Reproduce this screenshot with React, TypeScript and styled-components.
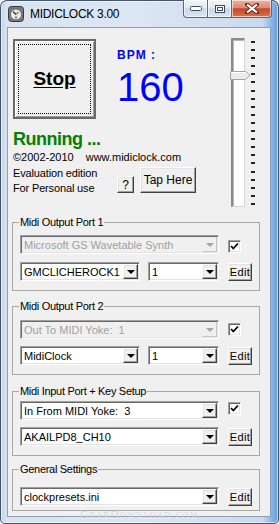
import styled, { createGlobalStyle, css } from 'styled-components'

const GlobalStyle = createGlobalStyle`
  html, body {
    margin: 0;
    padding: 0;
    background: #fff;
  }
  body {
    font-family: 'Liberation Sans', Arial, sans-serif;
    font-size: 11px;
    color: #000;
  }
`

const raised = css`
  box-sizing: border-box;
  background: #f0f0f0;
  border: 1px solid;
  border-color: #fff #404040 #404040 #fff;
  box-shadow: inset -1px -1px 0 #a0a0a0, inset 1px 1px 0 #e3e3e3;
`

const sunken = css`
  box-sizing: border-box;
  border: 1px solid;
  border-color: #a0a0a0 #fff #fff #a0a0a0;
  box-shadow: inset 1px 1px 0 #696969, inset -1px -1px 0 #e3e3e3;
`

const Window = styled.div`
  position: relative;
  width: 279px;
  height: 524px;
  box-sizing: border-box;
  display: flex;
  flex-direction: column;
  padding: 0 8px 7px 7px;
  border-radius: 7px 7px 5px 5px;
  overflow: hidden;
  background: linear-gradient(
    to right,
    #c3d4e7 0px,
    #d8e4f1 7px,
    #dce6f2 50%,
    #c9daee 262px,
    #86b3e6 272px,
    #5f98d8 279px
  );
  box-shadow: inset 0 0 0 1px #44566c, inset 0 0 0 2px rgba(255, 255, 255, 0.55);
`

const TitleBar = styled.div`
  height: 27px;
  display: flex;
  align-items: flex-start;
  flex: none;
`

const AppIcon = styled.svg`
  margin: 6px 0 0 1px;
  flex: none;
`

const Title = styled.div`
  margin: 6px 0 0 6px;
  line-height: 16px;
  font-size: 12px;
  letter-spacing: -0.3px;
  color: #000;
`

const Controls = styled.div`
  margin: 0 -1px 0 auto;
  display: flex;
  height: 18px;
`

const CtlButton = styled.div<{ $w: number; $close?: boolean; $first?: boolean }>`
  width: ${(p) => p.$w}px;
  height: 18px;
  box-sizing: border-box;
  display: flex;
  align-items: center;
  justify-content: center;
  border: 1px solid #56697f;
  border-top: none;
  margin-left: ${(p) => (p.$first ? 0 : -1)}px;
  border-radius: ${(p) => (p.$first ? '0 0 0 4px' : p.$close ? '0 0 4px 0' : '0')};
  background: ${(p) =>
    p.$close
      ? 'linear-gradient(#eab2a4 0%, #dc8a74 45%, #c8452c 52%, #d5734f 100%)'
      : 'linear-gradient(#f3f7fc 0%, #e1e9f3 45%, #cad7e7 52%, #d9e5f3 100%)'};
  box-shadow: inset 0 0 0 1px rgba(255, 255, 255, 0.6);
`

const Client = styled.div`
  flex: 1;
  display: flex;
  flex-direction: column;
  background: #f0f0f0;
  border: 1px solid #8ba0b8;
`

const TopSection = styled.div`
  display: flex;
  padding-left: 5px;
`

const LeftCol = styled.div`
  width: 217px;
  display: flex;
  flex-direction: column;
  padding-top: 11px;
`

const HeadRow = styled.div`
  display: flex;
  align-items: flex-start;
`

const StopButton = styled.div`
  width: 83px;
  height: 80px;
  box-sizing: border-box;
  display: flex;
  align-items: center;
  justify-content: center;
  background: #f0f0f0;
  border: 2px solid #6a6a6a;
  box-shadow: inset 1px 1px 0 #fff, inset -1px -1px 0 #a0a0a0;
  outline: 1px dotted #000;
  outline-offset: -6px;
  font-size: 19px;
  font-weight: bold;
  text-decoration: underline;
  text-underline-offset: 2px;
`

const BpmBlock = styled.div`
  margin-left: 21px;
  padding-top: 9px;
  color: #0000ff;
`

const BpmLabel = styled.div`
  font-size: 12px;
  font-weight: bold;
  line-height: 14px;
  letter-spacing: 1px;
`

const BpmValue = styled.div`
  margin-top: 5px;
  font-size: 40px;
  line-height: 40px;
`

const Running = styled.div`
  margin-top: 10px;
  font-size: 18px;
  font-weight: bold;
  line-height: 20px;
  letter-spacing: -0.5px;
  color: #008000;
`

const CopyRow = styled.div`
  margin-top: 1px;
  display: flex;
  gap: 12px;
  line-height: 14px;
`

const EvalRow = styled.div`
  margin-top: 2px;
  display: flex;
  align-items: flex-end;
`

const EvalText = styled.div`
  width: 104px;
  line-height: 15px;
  letter-spacing: -0.15px;
`

const PushButton = styled.div<{ $w: number; $h: number; $size?: number }>`
  ${raised};
  width: ${(p) => p.$w}px;
  height: ${(p) => p.$h}px;
  display: flex;
  align-items: center;
  justify-content: center;
  font-size: ${(p) => p.$size ?? 11}px;
  margin-bottom: 3px;
`

const HelpButton = styled(PushButton)`
  margin-right: 6px;
`

const SliderCol = styled.div`
  position: relative;
  display: flex;
  align-items: flex-start;
  padding-top: 10px;
  margin-left: 1px;
`

const Track = styled.div`
  width: 14px;
  height: 169px;
  box-sizing: border-box;
  background: #fff;
  border-style: solid;
  border-width: 2px 1px 1px 2px;
  border-color: #8a8a8a #d6d6d6 #d6d6d6 #8a8a8a;
  box-shadow: inset 1px 1px 0 #b8b8b8;
`

const Thumb = styled.svg`
  position: absolute;
  left: -1px;
  top: 43px;
`

const Ticks = styled.div`
  margin: 3px 0 0 6px;
  height: 164px;
  display: flex;
  flex-direction: column;
  justify-content: space-between;
`

const Tick = styled.span`
  width: 4px;
  height: 2px;
  background: #222;
`

const Groups = styled.div`
  padding: 8px 0 0 4px;
  display: flex;
  flex-direction: column;
`

const Group = styled.fieldset<{ $mt: number; $pt: number; $pb: number }>`
  margin: ${(p) => p.$mt}px 0 0 0;
  width: 248px;
  box-sizing: border-box;
  min-inline-size: 0;
  border: 1px solid #a9a9a9;
  padding: ${(p) => p.$pt}px 6px ${(p) => p.$pb}px 7px;
`

const Legend = styled.legend`
  padding: 0 1px;
  margin-left: -1px;
  font-size: 11px;
  line-height: 14px;
  letter-spacing: -0.3px;
`

const Rows = styled.div<{ $gap: number }>`
  display: flex;
  flex-direction: column;
  gap: ${(p) => p.$gap}px;
`

const Row = styled.div`
  display: flex;
  align-items: center;
`

const Combo = styled.div<{ $w: number; $off?: boolean; $mr?: number }>`
  ${sunken};
  width: ${(p) => p.$w}px;
  height: 19px;
  flex: none;
  display: flex;
  align-items: center;
  justify-content: space-between;
  padding: 0 1px 0 3px;
  margin-right: ${(p) => p.$mr ?? 10}px;
  background: ${(p) => (p.$off ? '#f0f0f0' : '#fff')};
  color: ${(p) => (p.$off ? '#a0a0a0' : '#000')};
  white-space: pre;
  overflow: hidden;
`

const ArrowBtn = styled.span<{ $off?: boolean }>`
  ${raised};
  width: 15px;
  height: 15px;
  flex: none;
  display: flex;
  align-items: center;
  justify-content: center;
  ${(p) =>
    p.$off &&
    css`
      border-color: #f0f0f0 #c8c8c8 #c8c8c8 #f0f0f0;
      box-shadow: none;
    `}

  &::after {
    content: '';
    margin-top: 1px;
    border-left: 4px solid transparent;
    border-right: 4px solid transparent;
    border-top: 4px solid ${(p) => (p.$off ? '#a6a6a6' : '#000')};
  }
`

const Check = styled.span<{ $align: 'flex-start' | 'center' | 'flex-end' }>`
  ${sunken};
  width: 13px;
  height: 13px;
  flex: none;
  display: flex;
  align-items: center;
  justify-content: center;
  background: #fff;
  align-self: ${(p) => p.$align};
  margin-bottom: ${(p) => (p.$align === 'flex-end' ? 1 : 0)}px;
  margin-top: ${(p) => (p.$align === 'flex-start' ? 1 : 0)}px;
`

const EditButton = styled.div`
  ${raised};
  width: 24px;
  height: 18px;
  flex: none;
  display: flex;
  align-items: center;
  justify-content: center;
  letter-spacing: 0.4px;
`

const Watermark = styled.div`
  position: absolute;
  left: 0;
  right: 0;
  bottom: 4px;
  text-align: center;
  font-family: 'Liberation Serif', 'Times New Roman', serif;
  font-size: 11px;
  font-variant: small-caps;
  letter-spacing: 1.5px;
  color: rgba(150, 150, 150, 0.35);
  text-shadow: 0 1px 0 rgba(255, 255, 255, 0.5);
`

function ComboBox({ text, w, off, mr }: { text: string; w: number; off?: boolean; mr?: number }) {
  return (
    <Combo $w={w} $off={off} $mr={mr}>
      <span>{text}</span>
      <ArrowBtn $off={off} />
    </Combo>
  )
}

function CheckBox({ align }: { align: 'flex-start' | 'center' | 'flex-end' }) {
  return (
    <Check $align={align}>
      <svg width='9' height='9' viewBox='0 0 9 9'>
        <polyline points='1,4 3.3,6.5 8,1.5' fill='none' stroke='#000' strokeWidth='1.8' />
      </svg>
    </Check>
  )
}

export default function App() {
  const ticks = Array.from({ length: 21 }, (_, i) => i)

  return (
    <>
      <GlobalStyle />
      <Window>
        <TitleBar>
          <AppIcon width='16' height='16' viewBox='0 0 16 16'>
            <rect x='0.5' y='0.5' width='15' height='15' rx='3' fill='#7a7a7a' stroke='#3a3a3a' />
            <circle cx='8' cy='8.5' r='5.6' fill='#e8e8e8' stroke='#555' strokeWidth='0.8' />
            <line x1='8' y1='8.5' x2='5' y2='5.5' stroke='#333' strokeWidth='1.2' />
            <line x1='8' y1='8.5' x2='10.5' y2='6' stroke='#333' strokeWidth='1' />
            <circle cx='8' cy='11.5' r='1.2' fill='#888' />
          </AppIcon>
          <Title>MIDICLOCK 3.00</Title>
          <Controls>
            <CtlButton $w={25} $first>
              <svg width='12' height='5' viewBox='0 0 12 5'>
                <rect x='0.5' y='0.5' width='11' height='4' rx='1' fill='#fff' stroke='#3d4d60' />
              </svg>
            </CtlButton>
            <CtlButton $w={25}>
              <svg width='10' height='8' viewBox='0 0 10 8'>
                <rect x='0.5' y='0.5' width='9' height='7' fill='#fff' stroke='#3d4d60' />
                <rect x='2.5' y='2.5' width='5' height='3' fill='none' stroke='#3d4d60' />
              </svg>
            </CtlButton>
            <CtlButton $w={41} $close>
              <svg width='14' height='11' viewBox='0 0 14 11'>
                <path
                  d='M2 1.5 L12 9.5 M12 1.5 L2 9.5'
                  stroke='#6b2a1c'
                  strokeWidth='4'
                  strokeLinecap='round'
                />
                <path d='M2 1.5 L12 9.5 M12 1.5 L2 9.5' stroke='#fff' strokeWidth='2.2' />
              </svg>
            </CtlButton>
          </Controls>
        </TitleBar>

        <Client>
          <TopSection>
            <LeftCol>
              <HeadRow>
                <StopButton>Stop</StopButton>
                <BpmBlock>
                  <BpmLabel>BPM :</BpmLabel>
                  <BpmValue>160</BpmValue>
                </BpmBlock>
              </HeadRow>
              <Running>Running ...</Running>
              <CopyRow>
                <span>©2002-2010</span>
                <span>www.midiclock.com</span>
              </CopyRow>
              <EvalRow>
                <EvalText>
                  Evaluation edition
                  <br />
                  For Personal use
                </EvalText>
                <HelpButton $w={17} $h={17} $size={12}>
                  ?
                </HelpButton>
                <PushButton $w={56} $h={26} $size={12}>
                  Tap Here
                </PushButton>
              </EvalRow>
            </LeftCol>

            <SliderCol>
              <Track />
              <Thumb width='21' height='9' viewBox='0 0 21 9'>
                <path d='M0.5 0.5 H15.5 L20 4 L15.5 8.5 H0.5 Z' fill='#ececec' stroke='#a2a2a2' />
                <path d='M1.5 1.5 H15 L18.5 4' fill='none' stroke='#fff' />
              </Thumb>
              <Ticks>
                {ticks.map((i) => (
                  <Tick key={i} />
                ))}
              </Ticks>
            </SliderCol>
          </TopSection>

          <Groups>
            <Group $mt={0} $pt={6} $pb={9}>
              <Legend>Midi Output Port 1</Legend>
              <Rows $gap={8}>
                <Row>
                  <ComboBox text='Microsoft GS Wavetable Synth' w={199} off mr={9} />
                  <CheckBox align='flex-end' />
                </Row>
                <Row>
                  <ComboBox text='GMCLICHEROCK1' w={120} mr={8} />
                  <ComboBox text='1' w={71} mr={9} />
                  <EditButton>Edit</EditButton>
                </Row>
              </Rows>
            </Group>

            <Group $mt={8} $pt={7} $pb={9}>
              <Legend>Midi Output Port 2</Legend>
              <Rows $gap={7}>
                <Row>
                  <ComboBox text='Out To MIDI Yoke:  1' w={199} off mr={9} />
                  <CheckBox align='center' />
                </Row>
                <Row>
                  <ComboBox text='MidiClock' w={120} mr={8} />
                  <ComboBox text='1' w={71} mr={9} />
                  <EditButton>Edit</EditButton>
                </Row>
              </Rows>
            </Group>

            <Group $mt={9} $pt={3} $pb={9}>
              <Legend>Midi Input Port + Key Setup</Legend>
              <Rows $gap={7}>
                <Row>
                  <ComboBox text='In From MIDI Yoke:  3' w={199} mr={9} />
                  <CheckBox align='flex-start' />
                </Row>
                <Row>
                  <ComboBox text='AKAILPD8_CH10' w={199} mr={9} />
                  <EditButton>Edit</EditButton>
                </Row>
              </Rows>
            </Group>

            <Group $mt={6} $pt={11} $pb={4}>
              <Legend>General Settings</Legend>
              <Rows $gap={0}>
                <Row>
                  <ComboBox text='clockpresets.ini' w={199} mr={9} />
                  <EditButton>Edit</EditButton>
                </Row>
              </Rows>
            </Group>
          </Groups>
        </Client>
        <Watermark>GearDownload.com</Watermark>
      </Window>
    </>
  )
}
